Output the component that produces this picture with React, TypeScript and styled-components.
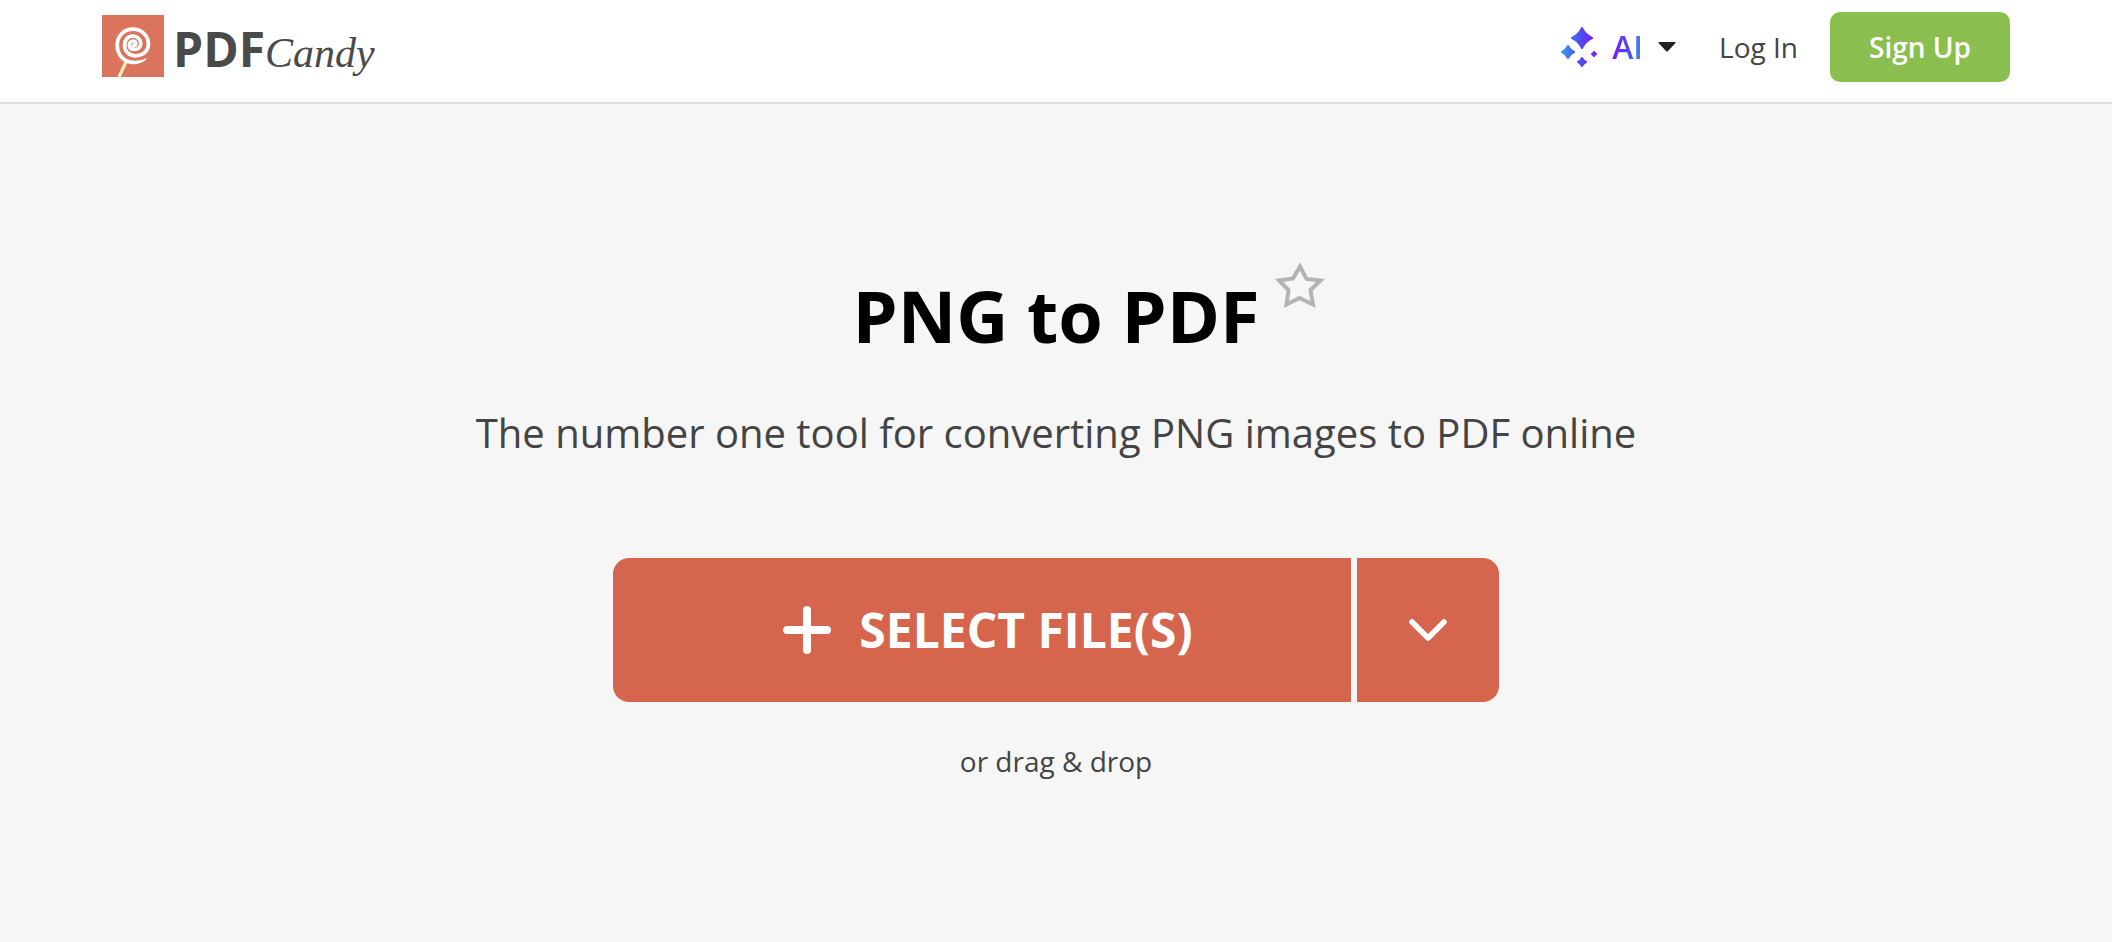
import React from "react";
import styled, { createGlobalStyle } from "styled-components";

const GlobalStyle = createGlobalStyle`
  *, *::before, *::after { box-sizing: border-box; }
  body {
    margin: 0;
    background: #f6f6f6;
    color: #444444;
    font-family: "Open Sans", "Noto Sans", sans-serif;
  }
  button { font: inherit; border: 0; cursor: pointer; }
`;

const Header = styled.header`
  display: flex;
  align-items: center;
  justify-content: space-between;
  height: 104px;
  padding: 0 102px 8px;
  background: #ffffff;
  border-bottom: 2px solid #e0e0e0;
`;

const Logo = styled.a`
  display: flex;
  align-items: flex-start;
  height: 64px;
  color: #4a4a4a;
  text-decoration: none;
`;

const LogoText = styled.span`
  display: flex;
  align-items: baseline;
  padding: 2px 0 0 9px;
  line-height: 64px;
`;

const LogoBold = styled.span`
  font-size: 48px;
  font-weight: 700;
`;

const LogoScript = styled.span`
  font-family: "Liberation Serif", serif;
  font-size: 42px;
  font-style: italic;
`;

const Nav = styled.nav`
  display: flex;
  align-items: center;
`;

const AiButton = styled.button`
  display: flex;
  align-items: center;
  gap: 15px;
  padding: 0;
  margin-right: 43px;
  background: none;
`;

const AiLabel = styled.span`
  font-size: 32px;
  line-height: 44px;
  font-weight: 600;
  color: transparent;
  background: linear-gradient(90deg, #8015f5, #4a50f0 55%, #3b8eea);
  background-clip: text;
`;

const LoginLink = styled.a`
  margin-right: 32px;
  color: #444444;
  font-size: 28px;
  line-height: 40px;
  text-decoration: none;
`;

const SignUp = styled.button`
  width: 180px;
  height: 70px;
  padding: 0;
  border-radius: 10px;
  background: #8abf4f;
  color: #ffffff;
  && { font-size: 28px; font-weight: 600; }
`;

const Main = styled.main`
  display: flex;
  flex-direction: column;
  align-items: center;
  padding: 162px 32px 64px;
`;

const Title = styled.h1`
  position: relative;
  margin: 0;
  color: #000000;
  font-size: 72px;
  font-weight: 700;
  line-height: 98px;
`;

const Favorite = styled.button`
  position: absolute;
  top: -6px;
  right: -65px;
  width: 50px;
  height: 50px;
  padding: 0;
  background: none;
  line-height: 0;
`;

const Subtitle = styled.p`
  margin: 41px 0 0;
  font-size: 40px;
  line-height: 56px;
`;

const Picker = styled.div`
  display: flex;
  gap: 6px;
  width: 100%;
  max-width: 886px;
  height: 144px;
  margin-top: 97px;
`;

const PickerButton = styled.button<{ $side: "left" | "right" }>`
  display: flex;
  align-items: center;
  justify-content: center;
  gap: 28px;
  flex: ${(p) => (p.$side === "left" ? "1 1 auto" : "0 0 142px")};
  padding: ${(p) => (p.$side === "left" ? "0 0 0 12px" : "0")};
  border-radius: ${(p) => (p.$side === "left" ? "16px 0 0 16px" : "0 16px 16px 0")};
  background: #d5654c;
  color: #ffffff;
  && { font-size: 48px; line-height: 64px; font-weight: 700; }
`;

const Hint = styled.p`
  margin: 39px 0 0;
  font-size: 28px;
  line-height: 40px;
`;

function LollipopIcon() {
  return (
    <svg width="62" height="62" viewBox="0 0 62 62" aria-hidden="true">
      <rect width="62" height="62" fill="#db745d" />
      <path d="M24.500 46L17 62" stroke="#fdeeb5" strokeWidth="3.200" />
      <path
        d="M31.500 30.500C35 31 34.300 26 30.800 26C26 26.500 26 34.500 32 34.500C36 34.500 38.800 32 38.800 28.500C38.500 24 35 21 31 21C26 21 22.500 25 22.500 30C22.500 36.500 27.500 40.800 33.500 40.800C41 40.800 46.500 36 46.500 28.500C46 20 39 14.200 31 14.200C22 14.200 15.200 21 15.200 30C15.200 40 22 47 31 47.500"
        fill="none"
        stroke="#fff"
        strokeWidth="3.700"
        strokeLinecap="round"
      />
      <path d="M30 45.500Q38 46.500 45.500 43Q40 49.500 30 49.300z" fill="#fff" />
    </svg>
  );
}

function Spark({ x, y, r }: { x: number; y: number; r: number }) {
  const c = r * 0.32;
  const d =
    `M${x} ${y - r}Q${x + c} ${y - c} ${x + r} ${y}` +
    `Q${x + c} ${y + c} ${x} ${y + r}` +
    `Q${x - c} ${y + c} ${x - r} ${y}` +
    `Q${x - c} ${y - c} ${x} ${y - r}Z`;
  return <path d={d} fill="url(#spark)" stroke="url(#spark)" strokeWidth="2" strokeLinejoin="round" />;
}

function SparkIcon() {
  return (
    <svg width="36" height="40" viewBox="0 0 36 40" aria-hidden="true">
      <defs>
        <linearGradient id="spark" x1="0" x2="36" y1="0" y2="0" gradientUnits="userSpaceOnUse">
          <stop offset="0" stopColor="#3b9bea" />
          <stop offset="0.500" stopColor="#4a50f0" />
          <stop offset="1" stopColor="#8a15f5" />
        </linearGradient>
      </defs>
      <Spark x={21} y={11} r={10} />
      <Spark x={7} y={25} r={6} />
      <Spark x={21} y={35} r={4} />
      <Spark x={33} y={27} r={2} />
    </svg>
  );
}

export default function App() {
  return (
    <>
      <GlobalStyle />
      <Header>
        <Logo href="#" aria-label="PDF Candy">
          <LollipopIcon />
          <LogoText>
            <LogoBold>PDF</LogoBold>
            <LogoScript>Candy</LogoScript>
          </LogoText>
        </Logo>
        <Nav>
          <AiButton type="button">
            <SparkIcon />
            <AiLabel>AI</AiLabel>
            <svg width="18" height="10" viewBox="0 0 18 10" aria-hidden="true">
              <path d="M1 0h16q1 0 .5 1L10 9q-1 1-2 0L.5 1Q0 0 1 0z" fill="#222" />
            </svg>
          </AiButton>
          <LoginLink href="#">Log In</LoginLink>
          <SignUp type="button">Sign Up</SignUp>
        </Nav>
      </Header>
      <Main>
        <Title>
          PNG to PDF
          <Favorite type="button" aria-label="Add to favorites">
            <svg width="50" height="50" viewBox="0 0 50 50" aria-hidden="true">
              <path
                d="M25 6.500L31.500 19L45.500 20.500L35.500 30L38 44.500L24.500 38L11.500 44.500L13.500 30L4 20.500L18 18.500Z"
                fill="none"
                stroke="#b3b3b3"
                strokeWidth="4"
              />
            </svg>
          </Favorite>
        </Title>
        <Subtitle>The number one tool for converting PNG images to PDF online</Subtitle>
        <Picker>
          <PickerButton type="button" $side="left">
            <svg width="48" height="48" viewBox="0 0 48 48" aria-hidden="true">
              <path d="M24 4v40M4 24h40" stroke="#fff" strokeWidth="8" strokeLinecap="round" />
            </svg>
            SELECT FILE(S)
          </PickerButton>
          <PickerButton type="button" $side="right" aria-label="More sources">
            <svg width="38" height="22" viewBox="0 0 38 22" aria-hidden="true">
              <path d="M3 3l16 16L35 3" fill="none" stroke="#fff" strokeWidth="5.500" strokeLinecap="round" strokeLinejoin="round" />
            </svg>
          </PickerButton>
        </Picker>
        <Hint>or drag &amp; drop</Hint>
      </Main>
    </>
  );
}
